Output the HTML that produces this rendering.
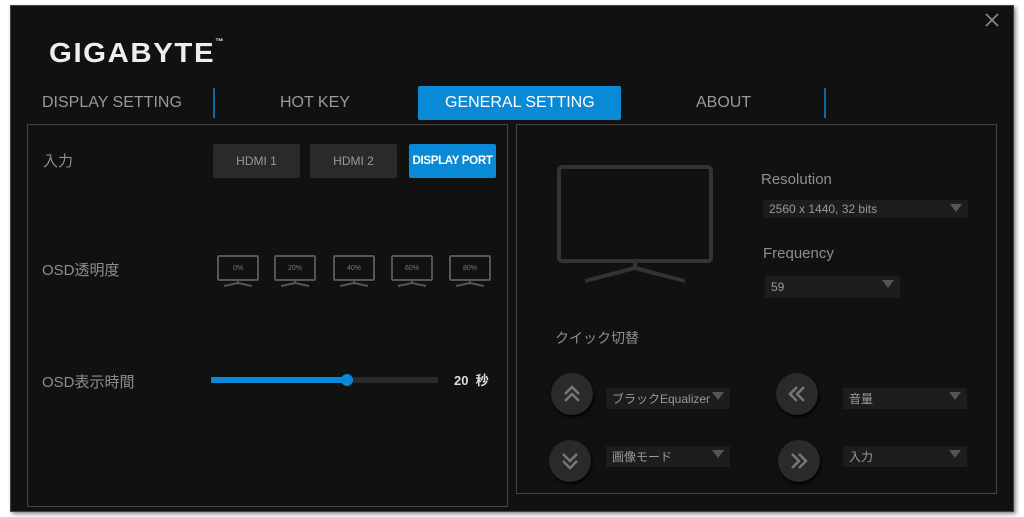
<!DOCTYPE html>
<html><head><meta charset="utf-8"><style>
*{margin:0;padding:0;box-sizing:border-box}
body{width:1024px;height:517px;background:#fff;position:relative;overflow:hidden;font-family:"Liberation Sans","Noto Sans CJK JP",sans-serif}
.a{position:absolute}
#win{left:10px;top:5px;width:1004px;height:507px;background:#111;border:1px solid #444;box-shadow:2px 2px 4px #888}
.tab{color:#999;font-size:16px;top:94px}
.sep{width:2px;height:30px;background:#0b6aa8;top:88px}
.lbl{color:#8e8e8e;font-size:15px}
.btn{top:144px;height:34px;background:#2a2a2a;color:#999;font-size:12px;display:flex;align-items:center;justify-content:center;border-radius:2px}
.mon{top:255px;width:42px;height:26px;border:2px solid #555;border-radius:2px;color:#777;font-size:7px;display:flex;align-items:center;justify-content:center}
.dd{background:#1d1d1d;color:#999;font-size:12px;padding-left:6px;display:flex;align-items:center}
.dd:after{content:"";position:absolute;right:6px;top:4px;border-left:6px solid transparent;border-right:6px solid transparent;border-top:8px solid #555}
.cir{width:42px;height:42px;border-radius:50%;background:#2a2a2a;box-shadow:1px 2px 3px #000}
.cir svg{position:absolute;left:0;top:0}
</style></head><body>
<div id="win" class="a"></div>
<svg class="a" style="left:985px;top:13px" width="14" height="14"><path d="M1 1l12 12M13 1L1 13" stroke="#999" stroke-width="1.5"/></svg>
<div class="a" style="left:49px;top:37px;color:#eee;font-size:28px;font-weight:bold;letter-spacing:1.5px;transform:scaleX(1.05);transform-origin:left">GIGABYTE<span style="font-size:8px;vertical-align:top">™</span></div>
<div class="a tab" style="left:42px">DISPLAY SETTING</div>
<div class="a sep" style="left:213px"></div>
<div class="a tab" style="left:280px">HOT KEY</div>
<div class="a" style="left:418px;top:86px;width:203px;height:34px;background:#0a8ad6;border-radius:2px"></div>
<div class="a tab" style="left:445px;color:#fff">GENERAL SETTING</div>
<div class="a tab" style="left:696px">ABOUT</div>
<div class="a sep" style="left:824px"></div>
<div class="a" style="left:27px;top:124px;width:481px;height:383px;border:1px solid #444"></div>
<div class="a" style="left:516px;top:124px;width:481px;height:370px;border:1px solid #444"></div>
<div class="a lbl" style="left:43px;top:150px">入力</div>
<div class="a btn" style="left:213px;width:87px">HDMI 1</div>
<div class="a btn" style="left:310px;width:87px">HDMI 2</div>
<div class="a btn" style="left:409px;width:87px;background:#0a8ad6;color:#fff;font-size:11.5px;font-weight:bold;letter-spacing:-0.3px">DISPLAY PORT</div>
<div class="a lbl" style="left:42px;top:259px">OSD透明度</div>
<div class="a mon" style="left:217px">0%</div>
<div class="a mon" style="left:274px">20%</div>
<div class="a mon" style="left:333px">40%</div>
<div class="a mon" style="left:391px">60%</div>
<div class="a mon" style="left:449px">80%</div>
<svg class="a" style="left:0;top:0" width="1024" height="517"><g stroke="#555" stroke-width="2" fill="none">
<path d="M238 281v2M224 286l14-3 14 3M295 281v2M281 286l14-3 14 3M354 281v2M340 286l14-3 14 3M412 281v2M398 286l14-3 14 3M470 281v2M456 286l14-3 14 3"/>
<rect x="559" y="167" width="152" height="94" rx="3" stroke="#333" stroke-width="4"/>
<path d="M635 263v5M585 281l50-13 50 13" stroke="#333" stroke-width="4"/>
</g></svg>
<div class="a lbl" style="left:42px;top:371px">OSD表示時間</div>
<div class="a" style="left:211px;top:377px;width:227px;height:6px;background:#2a2a2a"></div>
<div class="a" style="left:211px;top:377px;width:136px;height:6px;background:#0a8ad6"></div>
<div class="a" style="left:341px;top:374px;width:12px;height:12px;border-radius:50%;background:#0a8ad6"></div>
<div class="a" style="left:454px;top:370px;color:#ddd;font-size:13px;font-weight:bold">20 &nbsp;秒</div>
<div class="a lbl" style="left:761px;top:171px">Resolution</div>
<div class="a dd" style="left:763px;top:200px;width:205px;height:18px">2560 x 1440, 32 bits</div>
<div class="a lbl" style="left:763px;top:245px">Frequency</div>
<div class="a dd" style="left:765px;top:276px;width:135px;height:22px">59</div>
<div class="a lbl" style="left:555px;top:328px;font-size:14px">クイック切替</div>
<div class="a cir" style="left:551px;top:373px"><svg width="42" height="42"><path d="M14 21l7-7 7 7M14 28l7-7 7 7" stroke="#777" stroke-width="2.5" fill="none"/></svg></div>
<div class="a cir" style="left:549px;top:440px"><svg width="42" height="42"><path d="M14 14l7 7 7-7M14 21l7 7 7-7" stroke="#777" stroke-width="2.5" fill="none"/></svg></div>
<div class="a cir" style="left:776px;top:373px"><svg width="42" height="42"><path d="M21 14l-7 7 7 7M28 14l-7 7 7 7" stroke="#777" stroke-width="2.5" fill="none"/></svg></div>
<div class="a cir" style="left:778px;top:440px"><svg width="42" height="42"><path d="M14 14l7 7-7 7M21 14l7 7-7 7" stroke="#777" stroke-width="2.5" fill="none"/></svg></div>
<div class="a dd" style="left:606px;top:388px;width:124px;height:21px">ブラックEqualizer</div>
<div class="a dd" style="left:606px;top:446px;width:124px;height:21px">画像モード</div>
<div class="a dd" style="left:843px;top:388px;width:124px;height:21px">音量</div>
<div class="a dd" style="left:843px;top:446px;width:124px;height:21px">入力</div>
</body></html>
